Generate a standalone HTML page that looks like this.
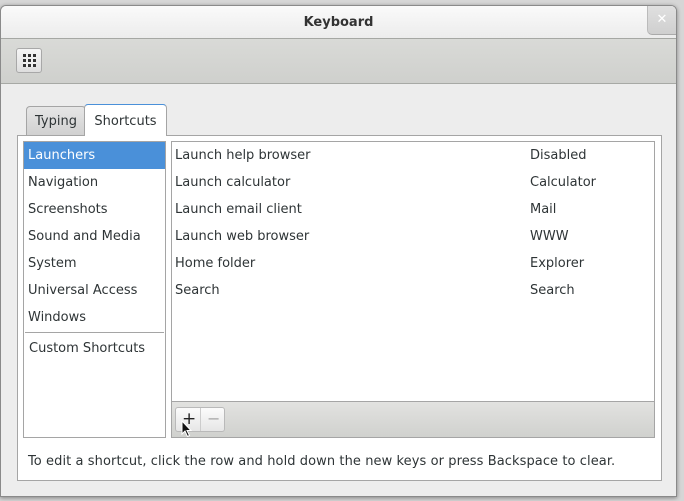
<!DOCTYPE html>
<html><head><style>
*{margin:0;padding:0;box-sizing:border-box}
body{width:684px;height:501px;background:#d6d6d6;font-family:"DejaVu Sans","Liberation Sans",sans-serif;font-size:13px;color:#2e3436;position:relative;overflow:hidden}
.win{position:absolute;left:0;top:5px;width:677px;height:492px;background:#ededed;border:1px solid #8a8a8a;border-radius:6px 6px 0 0;overflow:hidden;box-shadow:0 1px 4px rgba(0,0,0,.4)}
.title{position:absolute;left:0;top:0;width:100%;height:33px;background:linear-gradient(#fafafa,#ececec);border-bottom:1px solid #a5a7a3;text-align:center;line-height:33px;font-weight:bold;font-size:13px;color:#333}
.close{position:absolute;right:0;top:0;width:29px;height:29px;background:linear-gradient(#e0e0e0,#cfcfcf);border-left:1px solid #bbb;border-bottom:1px solid #aaa;border-radius:0 0 0 5px;color:#fff;font-weight:bold;line-height:28px;text-align:center;font-size:13px}
.tb{position:absolute;left:0;top:33px;width:100%;height:45px;background:linear-gradient(#d9dad7,#cfd0cd);border-bottom:1px solid #a7a9a5}
.gb{position:absolute;left:15px;top:9px;width:26px;height:25px;border:1px solid #a8a8a8;border-radius:3px;background:linear-gradient(#f6f6f6,#dedede)}
.dots{position:absolute;left:6px;top:5px;width:13px;height:13px;background:
linear-gradient(90deg,transparent 3px,#f0f0f0 3px,#f0f0f0 5px,transparent 5px,transparent 8px,#f0f0f0 8px,#f0f0f0 10px,transparent 10px),
linear-gradient(transparent 3px,#f0f0f0 3px,#f0f0f0 5px,transparent 5px,transparent 8px,#f0f0f0 8px,#f0f0f0 10px,transparent 10px),#333}
.tab{position:absolute;height:30px;line-height:30px;text-align:center;border:1px solid #a5a5a5;border-bottom:none;border-radius:4px 4px 0 0}
.nb{position:absolute;left:16px;top:129px;width:645px;height:346px;background:#fff;border:1px solid #a5a5a5}
.left{position:absolute;left:5px;top:5px;width:143px;height:297px;border:1px solid #a5a5a5}
.left div{height:27px;line-height:28px;padding-left:4px}
.sel{background:#4a90d9;color:#fff}
.right{position:absolute;left:153px;top:5px;width:484px;height:297px;border:1px solid #a5a5a5}
.row{height:27px;line-height:28px;padding-left:3px;position:relative}
.row span{position:absolute;left:358px}
.bar{position:absolute;left:0;bottom:0;width:100%;height:36px;background:linear-gradient(#e2e2e0,#d0d1ce);border-top:1px solid #a5a5a5}
.btn{position:absolute;left:3px;top:5px;width:50px;height:25px;border:1px solid #b9b9b9;border-radius:3px;background:linear-gradient(#fbfbfb,#e6e6e6)}
.foot{position:absolute;left:10px;top:318px;font-size:13px;letter-spacing:0.08px}
</style></head><body>
<div class="win">
<div class="title">Keyboard<div class="close">✕</div></div>
<div class="tb"><div class="gb"><div class="dots"></div></div></div>
<div class="tab" style="left:25px;top:100px;width:60px;background:linear-gradient(#e6e6e6,#d0d0d0)">Typing</div>
<div class="tab" style="left:83px;top:98px;width:83px;height:32px;line-height:34px;background:#fff;border-top:1px solid #4a90d9;z-index:2">Shortcuts</div>
<div class="nb">
<div class="left">
<div class="sel">Launchers</div><div>Navigation</div><div>Screenshots</div><div>Sound and Media</div><div>System</div><div>Universal Access</div><div>Windows</div>
<div style="border-top:1px solid #a5a5a5;margin:1px 1px 0;padding-left:4px;height:30px;line-height:31px">Custom Shortcuts</div>
</div>
<div class="right">
<div class="row">Launch help browser<span>Disabled</span></div>
<div class="row">Launch calculator<span>Calculator</span></div>
<div class="row">Launch email client<span>Mail</span></div>
<div class="row">Launch web browser<span>WWW</span></div>
<div class="row">Home folder<span>Explorer</span></div>
<div class="row">Search<span>Search</span></div>
<div class="bar"><div class="btn"><span style="position:absolute;left:6px;top:1px;font-size:17px;color:#222">+</span><div style="position:absolute;left:24px;top:0;height:23px;border-left:1px solid #ccc"></div><span style="position:absolute;left:31px;top:1px;font-size:16px;color:#aaa">−</span></div>
<svg style="position:absolute;left:9px;top:18px" width="12" height="18" viewBox="0 0 12 18"><path d="M1 1 L1 14 L4 11 L6.5 16.5 L8.5 15.5 L6 10.5 L10 10.5 Z" fill="#111" stroke="#fff" stroke-width="1"/></svg>
</div>
</div>
<div class="foot">To edit a shortcut, click the row and hold down the new keys or press Backspace to clear.</div>
</div>
</div>
</body></html>
